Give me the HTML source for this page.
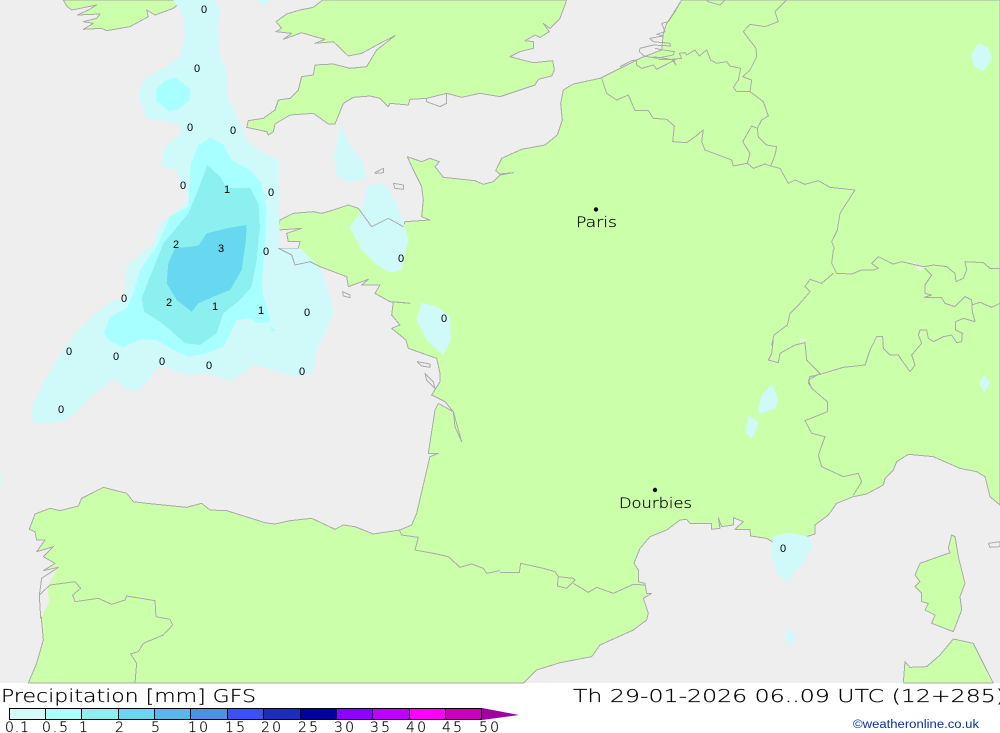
<!DOCTYPE html>
<html><head><meta charset="utf-8"><style>
html,body{margin:0;padding:0;background:#fff}
svg{display:block;position:absolute;left:0;top:0}
.t{font-family:"DejaVu Sans","Liberation Sans",sans-serif;font-weight:200;fill:#000;stroke:#000;stroke-width:.2}
.n{font-family:"Liberation Sans",sans-serif;font-size:11px;fill:#000;text-anchor:middle}
</style></head><body style="width:1000px;height:733px;overflow:hidden;position:relative">
<svg width="1000" height="733" viewBox="0 0 3000 2199" shape-rendering="crispEdges">
<rect x="0" y="0" width="3000" height="2199" fill="#fff"/>
<rect x="0" y="0" width="3000" height="2049" fill="#eeeeee"/>
<g fill="#ccffaa" stroke="#aaaaaa" stroke-width="3" stroke-linejoin="round">
<path d="M190 0L200 18 215 30 290 15 265 30 232 45 300 42 290 55 250 65 280 70 250 88 305 85 320 92 390 80 445 50 440 30 465 45 520 25 550 0Z"/>
<path d="M968 0L940 22 900 30 860 42 828 65 845 85 828 95 875 100 850 118 905 98 945 110 975 118 945 130 1000 125 1045 168 1085 160 1140 130 1185 107 1130 150 1100 200 1050 205 1000 192 945 195 940 225 905 230 895 270 870 295 835 300 825 330 790 355 745 362 740 382 800 395 805 405 820 395 825 372 870 345 940 340 985 372 1005 372 1030 310 1060 292 1110 288 1140 295 1165 320 1170 310 1225 315 1230 298 1280 295 1340 280 1385 292 1440 280 1500 290 1530 280 1575 265 1605 255 1615 238 1655 228 1663 210 1658 182 1600 188 1560 178 1530 170 1560 155 1600 145 1600 125 1575 122 1605 105 1620 112 1648 95 1630 70 1650 85 1680 55 1700 0Z"/>
<path d="M2045 0L2020 40 2000 70 1990 100 1985 150 1920 175 1860 205 1800 235 1720 252 1690 270 1682 310 1687 360 1672 405 1635 435 1565 448 1505 475 1487 512 1500 522 1540 518 1500 525 1480 545 1450 553 1425 542 1330 532 1305 500 1318 485 1290 475 1265 485 1222 470 1240 510 1265 560 1270 600 1265 650 1290 660 1215 665 1210 680 1165 655 1115 680 1075 625 1045 615 1000 630 965 640 940 635 880 640 840 660 835 690 905 685 860 700 865 725 900 725 895 745 840 745 875 765 885 795 930 785 960 800 1040 830 1045 860 1105 838 1085 855 1140 855 1125 880 1170 905 1230 910 1180 905 1175 945 1200 975 1175 985 1218 1020 1225 1045 1310 1075 1320 1120 1320 1145 1295 1185 1335 1205 1360 1235 1365 1280 1385 1325 1360 1235 1315 1210 1305 1230 1285 1360 1315 1360 1290 1370 1285 1390 1250 1540 1235 1575 1200 1590 1120 1602 1065 1580 1030 1575 1005 1588 935 1555 870 1562 825 1572 795 1568 680 1532 630 1530 605 1510 560 1522 440 1510 400 1505 380 1480 310 1462 245 1495 235 1518 180 1532 150 1525 105 1542 88 1588 105 1595 110 1620 135 1620 110 1655 160 1640 130 1670 165 1690 130 1712 175 1702 125 1735 118 1785 130 1920 110 1990 85 2049 1570 2049 1610 2010 1680 1988 1775 1970 1800 1935 1900 1890 1940 1860 1945 1840 1930 1795 1955 1780 1940 1780 1935 1750 1915 1745 1915 1710 1902 1690 1920 1645 1950 1610 2000 1590 2040 1560 2060 1558 2070 1570 2135 1570 2135 1588 2160 1585 2155 1553 2165 1580 2200 1575 2200 1553 2230 1565 2205 1588 2250 1588 2252 1608 2300 1615 2325 1630 2350 1623 2370 1625 2445 1602 2445 1575 2485 1545 2510 1510 2560 1490 2600 1482 2650 1455 2655 1435 2680 1410 2690 1385 2725 1363 2800 1370 2880 1405 2930 1415 2955 1430 2970 1490 3000 1515 3000 0Z"/>
<g transform="translate(1500,1020)">
<path d="M1355 585L1345 625 1350 638 1260 670 1245 705 1260 725 1245 740 1265 760 1265 785 1285 790 1275 810 1305 825 1295 850 1360 875 1385 810 1380 770 1395 730 1375 650 1365 590Z"/>
<path d="M1360 897L1320 945 1280 980 1230 982 1215 965 1210 1029 1480 1029 1460 990 1420 910Z"/>
</g>
</g>
<g fill="#eeeeee">
<path d="M175 1702L125 1735 118 1785 122 1855 148 1805 143 1770 152 1740Z"/>
<path d="M2720 780L2770 800 2760 815 2745 795Z"/>
<path d="M2400 1017L2420 1017 2400 1028Z"/>
</g>
<!-- precipitation -->
<g fill="#d0fafa">
<path d="M520 0L550 50 555 110 540 170 490 205 430 240 413 285 440 355 540 372 545 400 490 445 485 500 530 510 540 545 570 600 520 640 480 670 460 730 380 800 375 895 330 905 260 965 215 1015 170 1080 130 1150 95 1220 100 1270 175 1268 220 1245 250 1210 300 1170 335 1137 405 1177 440 1150 465 1110 485 1098 555 1123 620 1120 695 1142 760 1096 820 1110 880 1130 940 1118 950 1050 965 1020 1000 940 985 870 960 800 900 745 838 745 838 650 835 480 790 460 740 420 715 360 680 280 680 210 655 160 652 90 660 30 645 0Z"/>
<path d="M1025 370L1045 430 1085 480 1100 535 1050 547 1010 530 1002 465Z"/>
<path d="M1100 555L1150 552 1185 600 1215 680 1225 720 1205 810 1170 818 1130 795 1085 750 1048 680 1080 640 1095 590Z"/>
<path d="M1265 907L1310 920 1350 950 1353 1020 1330 1065 1280 1020 1250 960Z"/>
<path d="M770 0L790 14 815 0Z"/>
<path d="M0 1410L3 1410 3 1460 0 1465Z"/>
<path d="M2935 130L2965 142 2976 175 2950 213 2922 200 2913 165Z"/>
<g transform="translate(1500,1020)">
<path d="M815 132L835 180 825 205 785 220 773 215 785 165Z"/>
<path d="M745 227L775 245 770 270 755 296 737 280Z"/>
<path d="M1453 103L1470 130 1453 158 1437 130Z"/>
<path d="M820 588L870 578 925 590 940 620 900 680 860 727 830 695 813 640Z"/>
<path d="M870 865L887 890 870 918 854 890Z"/>
<path d="M1180 1029L1195 1024 1215 1029Z"/>
</g>
</g>
<g fill="#a8ffff">
<path d="M525 232L570 265 568 300 540 325 510 335 470 305 468 270 490 245Z"/>
<path d="M632 412L668 432 695 480 750 510 785 550 800 630 795 740 785 850 790 890 812 965 775 970 750 955 710 960 670 1040 620 1060 565 1070 520 1050 470 1020 420 1018 370 1042 325 1020 312 1000 330 950 380 925 400 880 420 810 470 740 510 650 565 620 573 490 595 435Z"/>
<path d="M810 978L830 992 812 993Z"/>
</g>
<path fill="#8cf0f0" d="M622 495L660 530 680 565 750 563 775 610 780 680 770 780 755 860 720 900 670 940 650 1000 600 1035 555 1030 510 990 480 965 432 935 425 895 450 830 490 730 565 640 590 580Z"/>
<path fill="#68d8f0" d="M740 675L738 720 725 810 690 870 640 890 595 910 575 935 530 900 500 850 505 790 525 745 595 737 620 700 680 685Z"/>
<!-- coast re-stroke over precipitation, borders and islands -->
<g fill="none" stroke="#aaaaaa" stroke-width="3" stroke-linejoin="round">
<path d="M835 745L875 765 885 795 930 785 960 800 1040 830 1045 860"/>
<path d="M1075 625L1115 680 1165 655 1210 680"/>
<path d="M1125 518L1150 505 1150 518 1128 520Z"/>
<path d="M1180 550L1210 555 1210 568 1185 565Z"/>
<path d="M1028 875L1050 885 1050 893 1030 888Z"/>
<path d="M1280 295L1340 280 1340 310 1320 320 1280 305Z"/>
<path d="M175 1702L125 1735 118 1785 122 1855"/>
<g transform="translate(0,1020)">
<path d="M1252 65L1290 72 1290 82 1265 78Z"/>
<path d="M1275 100L1300 125 1305 145 1280 120Z"/>
<path d="M118 765L150 735 225 725 242 745 218 765 225 785 295 775 335 793 375 780 380 768 465 782 468 830 510 838 518 855 490 885 430 910 415 935 392 942 410 970 405 1029"/>
<path d="M1198 570L1205 585 1255 592 1245 630 1300 640 1345 650 1380 682 1415 672 1450 685 1460 700 1500 692"/>
</g>
<g transform="translate(1860,0)">
<path d="M185 0L165 35 145 65 125 70 135 95 110 103 130 108 90 115 100 125 150 130 152 138 100 135 60 145 58 155 72 168 110 175 160 165 163 155 130 150 105 145"/>
<path d="M0 200L35 182 50 180 50 195 65 205 100 195 110 208 165 180 100 170"/>
<path d="M115 178L160 178 168 195 155 178 185 175 178 160 195 158 200 165 225 150 238 168 260 150 272 180 290 190 320 185 330 198 362 205 355 240 340 262 350 275 390 275"/>
<path d="M260 0L265 5 300 15 315 0"/>
<path d="M500 0L465 35 475 65 435 80 390 73 370 95 408 145 410 170 390 210 368 230 395 240 390 275 430 305 445 348 425 360 412 385 415 410 440 435 470 440 465 465 452 498"/>
</g>
<path d="M1805 235L1820 280 1850 300 1885 285 1905 332 1945 332 1960 355 2000 358 2023 378 2018 425 2060 428 2085 410 2110 390 2105 425 2115 450 2195 480 2200 498 2242 490"/>
<path d="M2272 385L2255 378 2228 425 2250 460 2242 490 2260 505 2295 492 2312 498 2340 505 2365 550 2385 540 2415 553 2455 542 2490 562 2565 570 2520 640 2512 690 2495 725 2503 745 2500 750"/>
<path d="M2400 910L2370 940 2362 975 2322 1005 2315 1035 2320 1020"/>
<g transform="translate(2400,750)">
<path d="M100 0L95 40 110 70 155 72 185 60 220 60 235 55 215 40 235 20 265 35 280 42 305 35 370 50 400 45 440 50 465 70 468 95 490 85 500 60 495 35 550 38 570 55 600 55"/>
<path d="M375 55L395 75 375 105 375 130 395 135 373 142 425 143 435 160 465 170 495 140 515 150 517 185 525 215 490 205 467 215 467 240 487 250 485 275 470 278 455 255 430 260 400 275 385 265 380 240 360 240 355 255 365 280 335 315 345 345 330 365 305 330 295 315 270 315 250 295 248 260 230 260 210 300 195 345 130 352 60 373 30 380 25 400 40 420"/>
<path d="M515 165L540 157 575 172 600 160"/>
<path d="M100 70L65 100 30 88 15 110 30 125 0 160"/>
</g>
<g transform="translate(1500,1020)">
<path d="M820 0L815 40 805 60 835 68 840 40 885 15 915 8 920 60 960 100 925 120 935 145 982 185 982 215 915 242 935 280 975 290 955 345 965 380 1030 410 1075 400 1085 425 1060 465"/>
<path d="M0 698L58 698 62 670 130 685 165 695 175 710 220 715 225 720 200 745 172 738 175 710"/>
<path d="M220 730L265 757 290 742 340 760 400 733 435 735"/>
<path d="M1465 610L1500 605 1500 620 1470 622Z"/>
</g>
</g>
</svg>
<svg width="1000" height="733" viewBox="0 0 1000 733">
<g class="n">
<text class="n" x="204" y="13">0</text><text class="n" x="197" y="72">0</text><text class="n" x="190" y="131">0</text><text class="n" x="233" y="134">0</text><text class="n" x="183" y="189">0</text><text class="n" x="227" y="193">1</text><text class="n" x="271" y="196">0</text><text class="n" x="176" y="248">2</text><text class="n" x="221" y="252">3</text><text class="n" x="266" y="255">0</text><text class="n" x="401" y="262">0</text><text class="n" x="124" y="302">0</text><text class="n" x="169" y="306">2</text><text class="n" x="215" y="310">1</text><text class="n" x="261" y="314">1</text><text class="n" x="307" y="316">0</text><text class="n" x="444" y="322">0</text><text class="n" x="69" y="355">0</text><text class="n" x="116" y="360">0</text><text class="n" x="162" y="365">0</text><text class="n" x="209" y="369">0</text><text class="n" x="302" y="375">0</text><text class="n" x="61" y="413">0</text><text class="n" x="783" y="552">0</text>
</g>
<circle cx="596" cy="209.5" r="2.2" fill="#111"/>
<circle cx="655" cy="490" r="2.2" fill="#111"/>
<text class="t" x="576" y="227" font-size="14" textLength="41" lengthAdjust="spacingAndGlyphs">Paris</text>
<text class="t" x="619" y="508" font-size="14" textLength="73" lengthAdjust="spacingAndGlyphs">Dourbies</text>
<text class="t" x="1" y="702" font-size="18" textLength="255" lengthAdjust="spacingAndGlyphs">Precipitation [mm] GFS</text>
<text class="t" x="573" y="702" font-size="18" textLength="432" lengthAdjust="spacingAndGlyphs">Th 29-01-2026 06..09 UTC (12+285)</text>
<g stroke="#000" stroke-width="1" shape-rendering="crispEdges">
<rect x="9.5" y="708.5" width="36" height="11" fill="#d4fafa"/>
<rect x="45.5" y="708.5" width="36" height="11" fill="#a8ffff"/>
<rect x="81.5" y="708.5" width="37" height="11" fill="#8cf0f0"/>
<rect x="118.5" y="708.5" width="36" height="11" fill="#68d8f0"/>
<rect x="154.5" y="708.5" width="36" height="11" fill="#58b8ec"/>
<rect x="190.5" y="708.5" width="37" height="11" fill="#4c90e8"/>
<rect x="227.5" y="708.5" width="36" height="11" fill="#3c50f8"/>
<rect x="263.5" y="708.5" width="37" height="11" fill="#1c2cc0"/>
<rect x="300.5" y="708.5" width="36" height="11" fill="#0000a0"/>
<rect x="336.5" y="708.5" width="36" height="11" fill="#9000ff"/>
<rect x="372.5" y="708.5" width="37" height="11" fill="#c000f8"/>
<rect x="409.5" y="708.5" width="36" height="11" fill="#ff00ff"/>
<rect x="445.5" y="708.5" width="36" height="11" fill="#c800c0"/>
</g>
<path d="M482 708L519 715 482 720Z" fill="#a000a0"/>
<g>
<text class="t" font-size="14" x="5" y="732" textLength="24">0.1</text>
<text class="t" font-size="14" x="42" y="732" textLength="26">0.5</text>
<text class="t" font-size="14" x="79" y="732">1</text>
<text class="t" font-size="14" x="115" y="732">2</text>
<text class="t" font-size="14" x="151" y="732">5</text>
<text class="t" font-size="14" x="188" y="732" textLength="20">10</text>
<text class="t" font-size="14" x="225" y="732" textLength="20">15</text>
<text class="t" font-size="14" x="261" y="732" textLength="20">20</text>
<text class="t" font-size="14" x="298" y="732" textLength="20">25</text>
<text class="t" font-size="14" x="334" y="732" textLength="20">30</text>
<text class="t" font-size="14" x="370" y="732" textLength="20">35</text>
<text class="t" font-size="14" x="406" y="732" textLength="20">40</text>
<text class="t" font-size="14" x="442" y="732" textLength="20">45</text>
<text class="t" font-size="14" x="479" y="732" textLength="20">50</text>
</g>
<text x="853" y="728" font-family="'Liberation Sans',sans-serif" font-size="11.5" fill="#003399" textLength="126" lengthAdjust="spacingAndGlyphs">©weatheronline.co.uk</text>
</svg>
</body></html>
